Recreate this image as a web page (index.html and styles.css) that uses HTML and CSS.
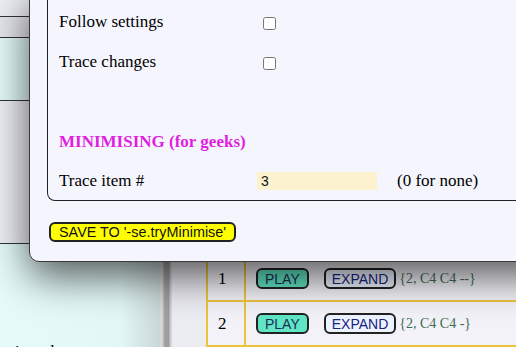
FILE: index.html
```html
<!DOCTYPE html>
<html lang="en">
<head>
  <meta charset="UTF-8" />
  <meta name="viewport" content="width=device-width, initial-scale=1.0" />
  <title>Settings</title>
  <link rel="stylesheet" href="styles.css">
</head>
<body>
  <div class="page">
    <div class="side">
      <div class="band band-top"></div>
      <div class="band band-gray"></div>
      <div class="band band-cyan"></div>
      <div class="band band-mid"></div>
      <div class="band band-cyan band-last">
        <p class="side-text">into the</p>
      </div>
    </div>
    <div class="scroller"></div>
    <div class="main">
      <table class="moves">
        <tr><td class="num"></td><td></td></tr>
        <tr>
          <td class="num">1</td>
          <td>
            <button class="play">PLAY</button>
            <button class="expand">EXPAND</button><span class="set">{2, C4 C4 --}</span>
          </td>
        </tr>
        <tr>
          <td class="num">2</td>
          <td>
            <button class="play">PLAY</button>
            <button class="expand">EXPAND</button><span class="set">{2, C4 C4 -}</span>
          </td>
        </tr>
      </table>
    </div>
  </div>

  <div class="modal">
    <div class="box">
      <div class="row">
        <label for="follow">Follow settings</label>
        <span><input type="checkbox" id="follow" /></span>
      </div>
      <div class="row">
        <label for="trace">Trace changes</label>
        <span><input type="checkbox" id="trace" /></span>
      </div>
      <div class="row"></div>
      <div class="row">
        <h3 class="geeks">MINIMISING (for geeks)</h3>
      </div>
      <div class="row row-last">
        <label for="item">Trace item #</label>
        <input type="text" id="item" class="item" value="3" />
        <span class="hint">(0 for none)</span>
      </div>
    </div>
    <button class="save">SAVE TO '-se.tryMinimise'</button>
  </div>
</body>
</html>
```

FILE: styles.css
```css
/* Background page */
body {
  margin: 0;
  height: 347px;
  overflow: hidden;
  font-family: "Liberation Serif", serif;
  background-color: #ececf3;
}

.page {
  display: flex;
  height: 347px;
}

.side {
  width: 160px;
  flex-shrink: 0;
  display: flex;
  flex-direction: column;
}

.band {
  border-bottom: 1px solid #333;
  background: linear-gradient(to right, #eeeef6 0%, #eeeef6 75%, #d4d6dc 100%);
}

.band-top { height: 16px; }
.band-gray { height: 20px; background: linear-gradient(to right, #e6e6ee 0%, #e2e2ea 75%, #cfd0d6 100%); }
.band-cyan { height: 62px; background: linear-gradient(to right, #e4fbfa 0%, #e2f8f7 75%, #c9d6d6 100%); }
.band-mid { height: 142px; }
.band-last { flex: 1; border-bottom: none; overflow: hidden; }

.side-text {
  margin: 0;
  padding: 98px 0 0 15px;
  font-size: 17px;
}

.scroller {
  width: 12px;
  flex-shrink: 0;
  background: linear-gradient(to right, #d8dcdc 0, #d0d0d0 3px, #a4a4a6 4px, #9c9c9e 9px, #c8c8cc 10px, #dcdce2 12px);
}

.main {
  flex: 1;
  min-width: 0;
  overflow: hidden;
  padding-left: 34px;
}

.moves {
  border-collapse: collapse;
  table-layout: fixed;
  width: 380px;
  margin-top: 210px;
}

.moves td {
  border: 2px solid #ecc43c;
  height: 43px;
  padding: 0;
  background-color: #f2f2f8;
}

.moves td.num {
  width: 26px;
  padding-left: 10px;
  font-size: 17px;
}

.moves td + td {
  padding-left: 10px;
  white-space: nowrap;
}

.play,
.expand {
  font-family: "Liberation Sans", Arial, sans-serif;
  font-size: 14px;
  height: 21px;
  padding: 0 7px;
  border: 2px solid #222;
  border-radius: 6px;
  vertical-align: middle;
}

.play {
  background-color: #60e6c4;
  color: #1b2f55;
  margin-right: 11px;
}

.expand {
  background-color: #eef4ff;
  color: #1a237e;
  padding: 0 6px;
  margin-right: 3px;
}

.set {
  color: #3f6c50;
  font-size: 14px;
  vertical-align: middle;
}

/* Modal */
.modal {
  position: absolute;
  left: 29px;
  top: -10px;
  width: 540px;
  background-color: #f5f6fd;
  border: 1px solid #3a3a3a;
  border-radius: 10px;
  box-shadow: 0 14px 40px rgba(0, 0, 0, 0.65);
  padding-bottom: 19px;
}

.box {
  margin-left: 17px;
  padding-top: 10px;
  border: 1px solid #222;
  border-right: none;
  border-radius: 0 0 0 8px;
}

.row {
  display: grid;
  grid-template-columns: 198px 120px auto;
  align-items: center;
  height: 40px;
  padding-left: 11px;
  font-size: 17px;
}

.row-last {
  height: 38px;
}

.row input[type="checkbox"] {
  margin: 0 0 0 6px;
  width: 13px;
  height: 13px;
  vertical-align: middle;
}

.geeks {
  grid-column: 1 / -1;
  margin: 0;
  font-size: 17px;
  color: #e01ee0;
}

.item {
  width: 120px;
  height: 18px;
  box-sizing: border-box;
  border: none;
  padding: 0 4px;
  background-color: #fdf2cf;
  font-family: "Liberation Sans", Arial, sans-serif;
  font-size: 14px;
  color: #111;
}

.hint {
  padding-left: 20px;
}

.save {
  margin: 21px 0 0 19px;
  height: 20px;
  padding: 0 8px;
  background-color: #ffff00;
  border: 2px solid #222;
  border-radius: 6px;
  font-family: "Liberation Sans", Arial, sans-serif;
  font-size: 14.4px;
  color: #111;
}
```
